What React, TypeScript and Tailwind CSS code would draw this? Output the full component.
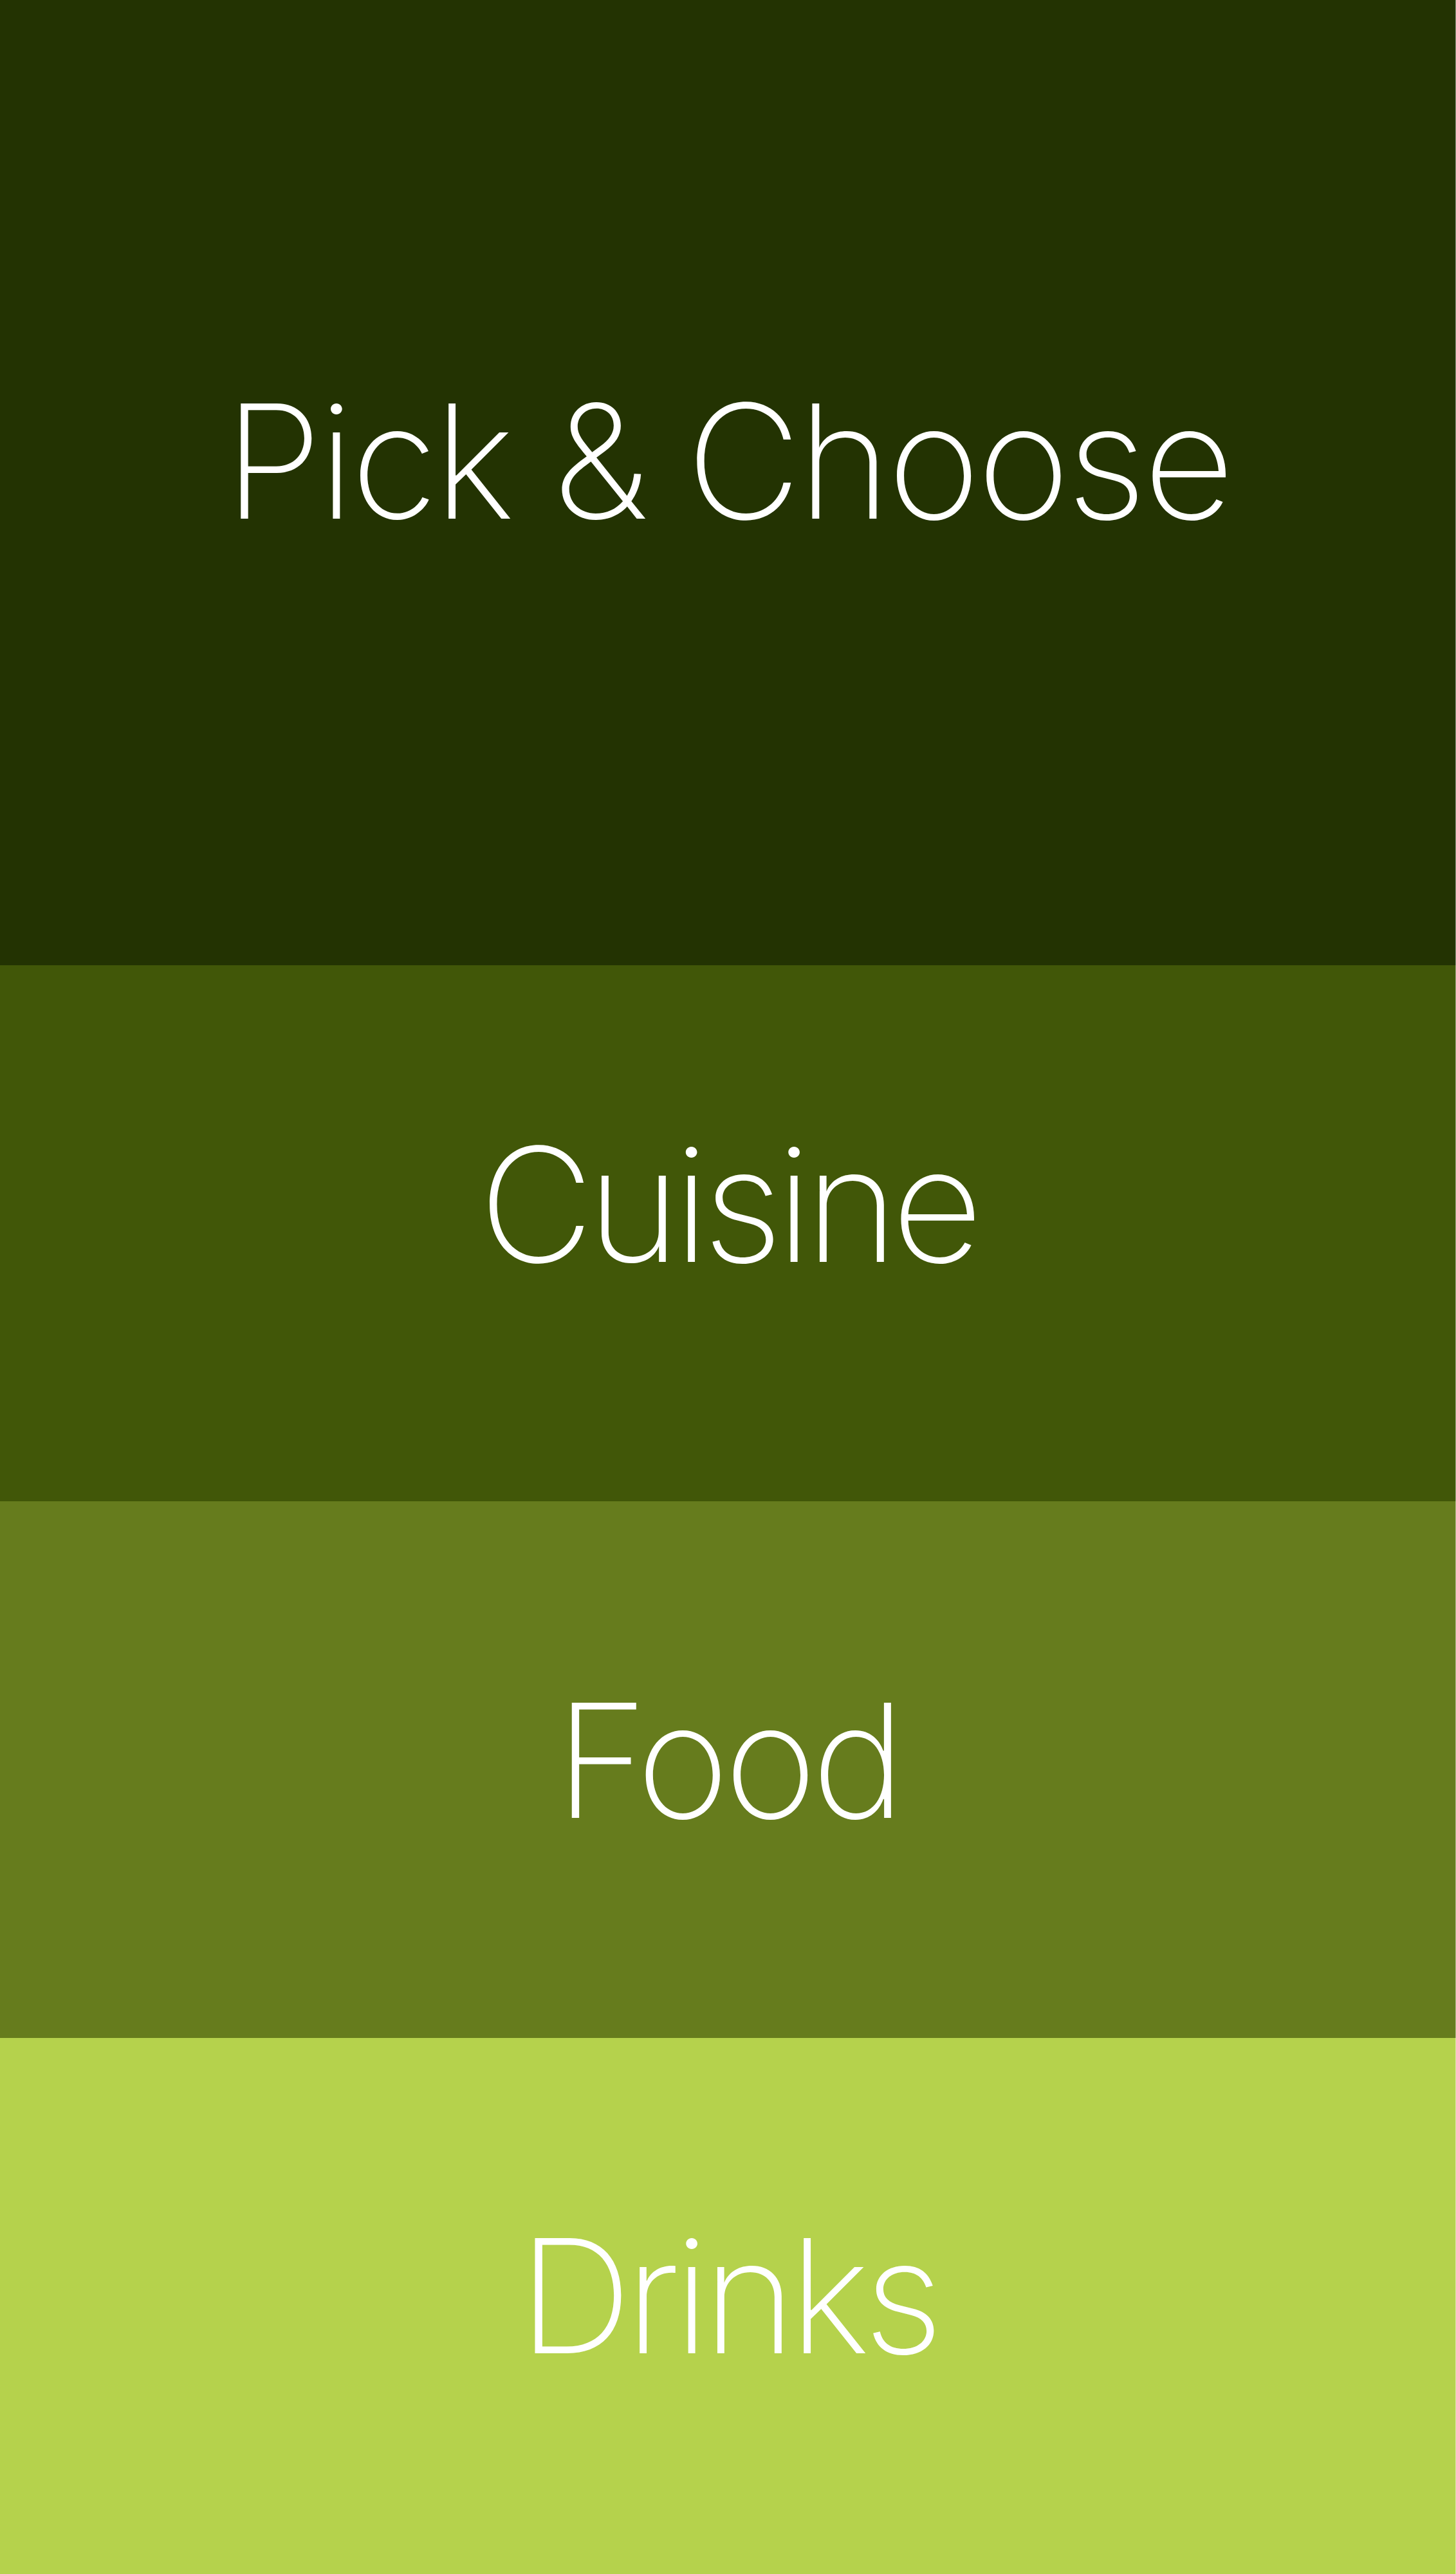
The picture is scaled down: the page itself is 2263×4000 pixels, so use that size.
import React from "react";

type Section = {
  label: string;
  className: string;
  textClassName: string;
};

// category picker: one full-width band per choice
const sections: Section[] = [
  {label: "Pick & Choose", className: "h-[1500px] bg-[#233302] pt-[594px]", textClassName: "tracking-[-5px]"},
  {label: "Cuisine", className: "h-[833px] bg-[#415708] pt-[249px]", textClassName: "tracking-[-10px]"},
  {label: "Food", className: "h-[834px] bg-[#667c1d] pt-[280px]", textClassName: "tracking-[-8px]"},
  {label: "Drinks", className: "h-[833px] bg-[#b5d24c] pt-[278px]", textClassName: "tracking-[-10px]"},
];

const Band = ({label, className, textClassName}: Section) => (
  <div className={`flex w-full justify-center border-r border-r-white/50 ${className}`}>
    <span
      className={`font-['Inter','Roboto',sans-serif] text-[246px] font-extralight leading-none text-white whitespace-nowrap ${textClassName}`}
    >
      {label}
    </span>
  </div>
);

const App = () => {
  return (
    <div className="flex w-[2263px] flex-col">
      {sections.map((s) => (
        <Band key={s.label} {...s} />
      ))}
    </div>
  );
};

export default App;
